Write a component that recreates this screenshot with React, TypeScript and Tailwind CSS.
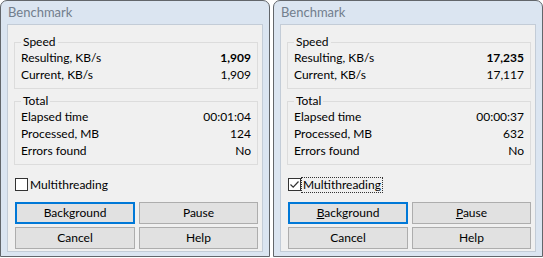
type Row = { label: string; value: string; bold?: boolean };

function Group({ title, rows, className }: { title: string; rows: Row[]; className?: string }) {
  return (
    <div className={`relative border border-[#dcdcdc] pt-[6px] pb-[5px] px-[6px] ${className ?? ""}`}>
      <span className="absolute -top-[9px] left-[6px] px-[2px] bg-[#f0f0f0] leading-[16px]">{title}</span>
      {rows.map((r) => (
        <div key={r.label} className="h-[17px] flex items-center justify-between leading-[17px]">
          <span>{r.label}</span>
          <span className={r.bold ? "font-bold" : ""}>{r.value}</span>
        </div>
      ))}
    </div>
  );
}

function Btn({ children, primary, wide }: { children: React.ReactNode; primary?: boolean; wide?: boolean }) {
  return (
    <div
      className={`h-[22px] flex items-center justify-center bg-[#e1e1e1] ${
        primary ? "border-2 border-[#0078d7]" : "border border-[#adadad]"
      } ${wide ? "w-[120px]" : "flex-1"}`}
    >
      {children}
    </div>
  );
}

function Dialog({
  resulting,
  current,
  elapsed,
  processed,
  checked,
  cues,
}: {
  resulting: string;
  current: string;
  elapsed: string;
  processed: string;
  checked?: boolean;
  cues?: boolean;
}) {
  return (
    <div className="w-[270px] h-[257px] flex flex-col border border-[#62666b] rounded-t-[7px] bg-[#dbe5f1] overflow-hidden">
      <div className="h-[23px] flex items-center pl-[7px] text-[13px] text-[#727e8d]">Benchmark</div>
      <div className="flex-1 mx-[6px] mb-[4px] border border-[#c3ccd7] bg-[#f0f0f0] flex flex-col pl-[6px] pr-[4px]">
        <Group
          className="mt-[17px]"
          title="Speed"
          rows={[
            { label: "Resulting, KB/s", value: resulting, bold: true },
            { label: "Current, KB/s", value: current },
          ]}
        />
        <Group
          className="mt-[12px]"
          title="Total"
          rows={[
            { label: "Elapsed time", value: elapsed },
            { label: "Processed, MB", value: processed },
            { label: "Errors found", value: "No" },
          ]}
        />
        <div className="mt-[12px] ml-[1px] h-[15px] flex items-center">
          <div className="w-[13px] h-[13px] border border-[#333333] bg-white flex items-center justify-center">
            {checked && (
              <svg width="11" height="11" viewBox="0 0 11 11">
                <path d="M1.5 5.5 L4.2 8.2 L9.5 2.5" fill="none" stroke="#333333" strokeWidth="1.2" />
              </svg>
            )}
          </div>
          <span
            className={`leading-[14px] px-[1px] border border-dotted ${
              cues ? "border-[#333333]" : "border-transparent"
            }`}
          >
            Multithreading
          </span>
        </div>
        <div className="mt-[10px] ml-[1px] flex gap-[4px]">
          <Btn primary wide>
            {cues ? (
              <span>
                <span className="underline">B</span>ackground
              </span>
            ) : (
              "Background"
            )}
          </Btn>
          <Btn>
            {cues ? (
              <span>
                <span className="underline">P</span>ause
              </span>
            ) : (
              "Pause"
            )}
          </Btn>
        </div>
        <div className="mt-[3px] ml-[1px] flex gap-[4px]">
          <Btn wide>Cancel</Btn>
          <Btn>Help</Btn>
        </div>
      </div>
    </div>
  );
}

export default function App() {
  return (
    <div className="w-[543px] h-[258px] bg-white flex gap-[3px] font-['Lato',sans-serif] text-[12px] text-black">
      <Dialog resulting="1,909" current="1,909" elapsed="00:01:04" processed="124" />
      <Dialog resulting="17,235" current="17,117" elapsed="00:00:37" processed="632" checked cues />
    </div>
  );
}
